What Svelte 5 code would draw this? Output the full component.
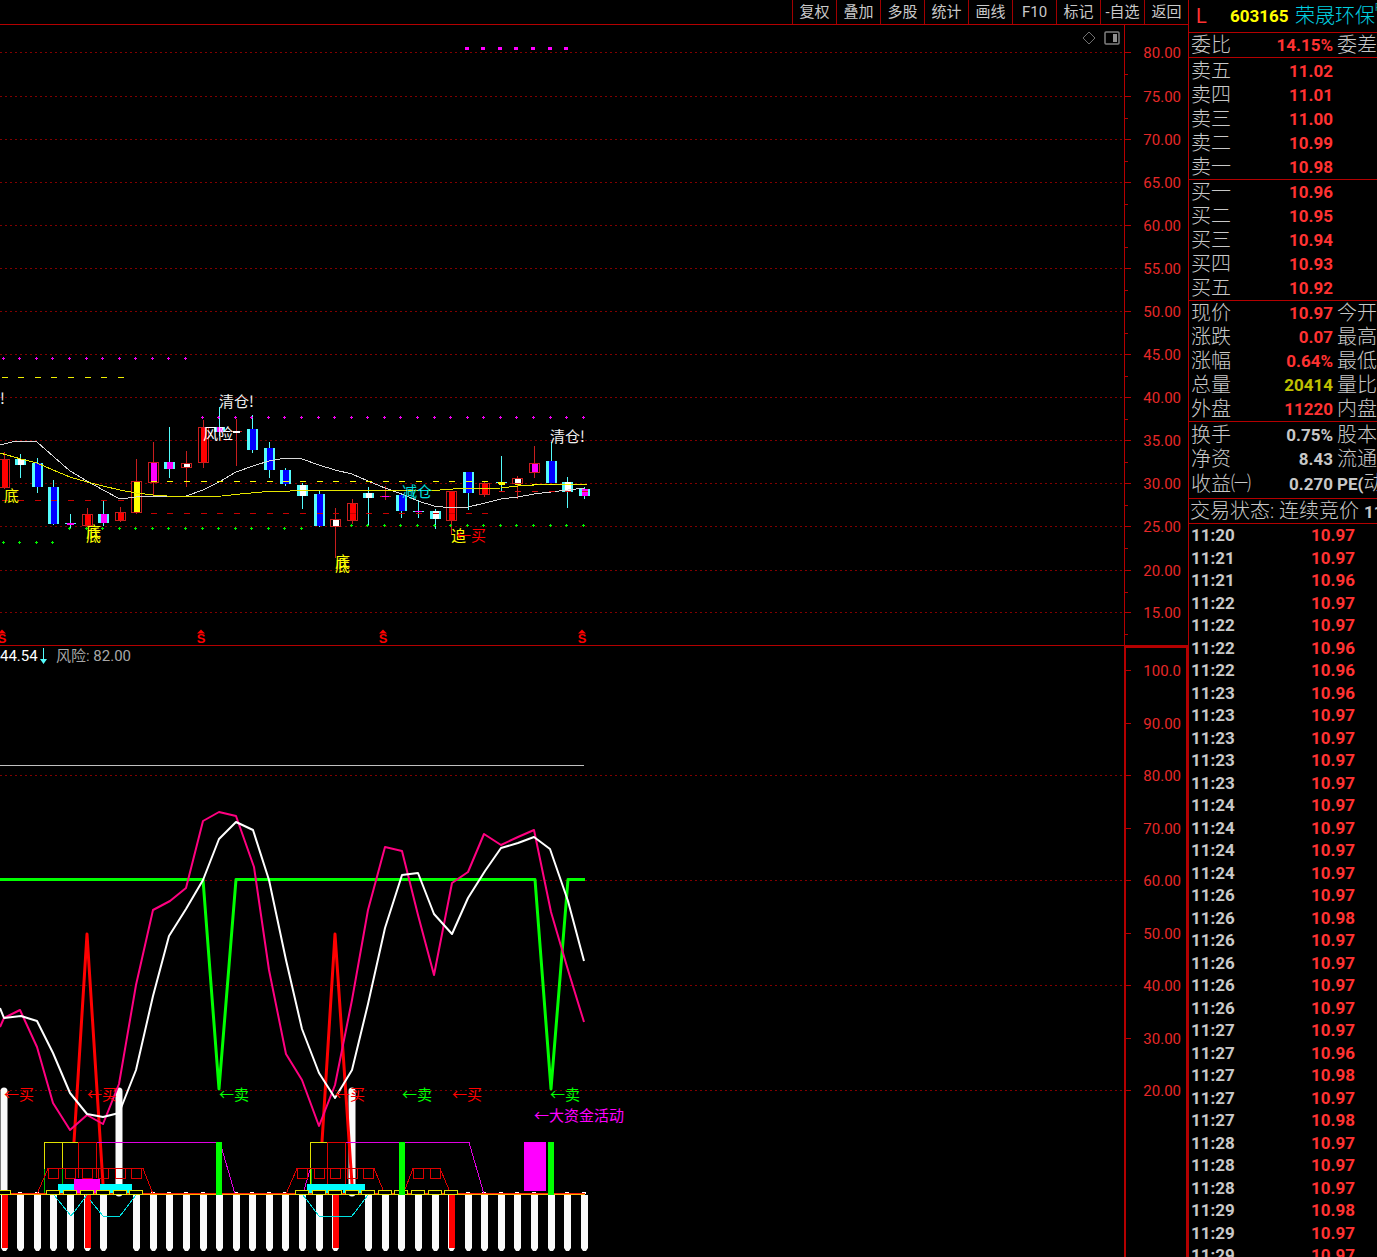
<script>
  const tools = ['复权', '叠加', '多股', '统计', '画线', 'F10', '标记', '-自选', '返回'];

  // One trading day per column
  const colX = (i) => Math.floor(4.2 + i * 16.57);
  const range = (a, b) => Array.from({ length: b - a + 1 }, (_, k) => a + k);
  const columns = range(0, 35);

  const priceScale = [52, 96, 139, 182, 225, 268, 311, 354, 397, 440, 483, 526, 570, 612]
    .map((y, k) => ({ y, label: (80 - k * 5).toFixed(2) }));
  const indicatorScale = [
    { y: 670, label: '100.0' }, { y: 723, label: '90.00' },
    { y: 775, label: '80.00', grid: true }, { y: 828, label: '70.00' },
    { y: 880, label: '60.00', grid: true }, { y: 933, label: '50.00' },
    { y: 985, label: '40.00', grid: true }, { y: 1038, label: '30.00' },
    { y: 1090, label: '20.00', grid: true }
  ];

  const R = '#ff0000', W = '#ffffff', B = '#0000ff', M = '#ff00ff', Y = '#ffff00';
  // high, low, body top, body bottom, rising, core colour
  const candles = [
    [452, 489, 459, 488, 1, R], [454, 478, 459, 465, 0, W], [458, 493, 463, 487, 0, B],
    [480, 525, 487, 524, 0, B], [514, 528, 523, 525, 0, M], [508, 527, 514, 526, 1, R],
    [500, 526, 514, 523, 0, M], [507, 522, 512, 521, 1, R], [459, 514, 481, 513, 1, Y],
    [442, 497, 462, 483, 1, M], [427, 478, 462, 469, 0, M], [451, 487, 463, 468, 1, W],
    [420, 468, 427, 463, 1, R], [407, 436, 427, 432, 0, M], [419, 466, 431, 433, 1, W],
    [415, 453, 429, 450, 0, B], [442, 478, 448, 470, 0, B], [468, 486, 470, 484, 0, B],
    [483, 509, 485, 496, 0, W], [490, 527, 494, 526, 0, B], [508, 558, 519, 527, 1, W],
    [499, 524, 503, 521, 1, R], [487, 525, 493, 498, 0, W], [486, 500, 496, 497, 1, M],
    [493, 518, 495, 511, 0, B], [500, 518, 511, 512, 0, M], [509, 529, 511, 519, 0, W],
    [491, 535, 491, 521, 1, R], [472, 510, 472, 493, 0, B], [481, 497, 483, 495, 1, R],
    [456, 491, 482, 484, 0, Y], [476, 499, 478, 484, 1, W], [446, 478, 463, 473, 1, M],
    [442, 483, 461, 483, 0, B], [477, 508, 482, 492, 0, W], [487, 499, 489, 496, 0, M]
  ].map(([high, low, top, bottom, up, core], i) => ({
    x: colX(i), high, low, top, h: bottom - top, edge: up ? '#c81e1e' : '#54fcfc', up, core
  }));

  const dots = [
    { y: 358, from: 0, to: 11, c: '#f000f0' }, { y: 417, from: 12, to: 35, c: '#f000f0' },
    { y: 542, from: 0, to: 3, c: '#00f000' }, { y: 528, from: 4, to: 18, c: '#00f000' },
    { y: 525, from: 21, to: 35, c: '#00f000' }
  ];
  const dashes = [
    { y: 377, from: 0, to: 7, c: '#f0f000' }, { y: 481, from: 9, to: 29, c: '#ffff00' },
    { y: 484, from: 30, to: 34, c: '#ffff00' }, { y: 500, from: 0, to: 7, c: '#c80000' },
    { y: 513, from: 9, to: 29, c: '#c80000' }, { y: 491, from: 30, to: 35, c: '#dc1414' }
  ];

  const whiteAvg = '0,445 12,442 21,441 37,442 54,457 70,471 87,481 103,490 120,499 136,497 153,496 186,496 203,490 219,482 236,472 253,466 269,461 286,458 302,459 319,465 335,470 352,474 368,481 385,488 402,494 418,501 434,506 452,508 468,507 485,503 501,499 518,497 534,494 568,490 584,488';
  const yellowAvg = '0,453 21,459 37,463 53,470 70,477 87,482 103,486 120,490 136,493 153,495 180,497 222,496 240,494 262,492 290,491 302,490 440,490 453,489 501,488 518,486 534,485 568,484 587,484';
  const pinkLine = '0,1027 4,1018 20,1010 37,1047 53,1103 70,1130 87,1115 103,1124 119,1084 136,985 153,910 170,901 186,888 203,821 219,812 236,816 254,867 269,970 286,1054 302,1080 319,1126 335,1085 352,1000 368,910 385,847 402,851 418,915 434,975 452,883 468,872 484,834 501,845 518,837 534,830 551,912 568,970 584,1022';
  const whiteLine = '0,1008 4,1018 21,1016 37,1021 53,1053 70,1093 87,1114 103,1117 119,1113 136,1070 153,996 169,936 186,909 203,880 219,839 236,822 253,830 269,880 286,960 302,1029 319,1073 335,1098 352,1070 368,1004 385,928 402,875 418,873 434,914 452,934 468,898 485,871 501,848 518,843 534,837 550,849 568,901 584,961';

  const splitMarks = [2, 201, 383, 582];
  const stems = columns.filter((i) => i !== 7 && i !== 21);
  const redStems = [0, 5, 20, 27];
  const knobs = [1, 2, ...range(9, 17), ...range(28, 32), 34, 35];
  const yellowBoxes = [0, ...range(3, 8), ...range(18, 27)];
  const redBoxes = [...range(3, 8), ...range(18, 22), 25, 26];

  const signals = [
    { x: 4, y: 1100, t: '←买', c: '#ff0000' }, { x: 87, y: 1100, t: '←买', c: '#ff0000' },
    { x: 335, y: 1100, t: '←买', c: '#ff0000' }, { x: 452, y: 1100, t: '←买', c: '#ff0000' },
    { x: 219, y: 1100, t: '←卖', c: '#00ff00' }, { x: 402, y: 1100, t: '←卖', c: '#00ff00' },
    { x: 550, y: 1100, t: '←卖', c: '#00ff00' }, { x: 534, y: 1121, t: '←大资金活动', c: M }
  ];
  const notes = [
    { x: 219, y: 407, t: '清仓!', c: '#f0f0f0' }, { x: 203, y: 439, t: '风险', c: W },
    { x: 550, y: 442, t: '清仓!', c: '#f0f0f0' }, { x: 0, y: 404, t: '!', c: '#f0f0f0' },
    { x: 402, y: 497, t: '减仓', c: '#00e0e0' }, { x: 4, y: 501, t: '底', c: Y },
    { x: 86, y: 537, t: '底', c: Y }, { x: 86, y: 541, t: '底', c: Y },
    { x: 335, y: 567, t: '底', c: Y }, { x: 335, y: 571, t: '底', c: Y },
    { x: 451, y: 541, t: '追', c: Y }, { x: 456, y: 541, t: '←买', c: '#ff0000' }
  ];

  const quotes = [
    { cls: 'ratio', rows: [['委比', '14.15%', '委差', 'up']] },
    { cls: 'asks', rows: [['卖五', '11.02'], ['卖四', '11.01'], ['卖三', '11.00'], ['卖二', '10.99'], ['卖一', '10.98']] },
    { cls: 'bids', rows: [['买一', '10.96'], ['买二', '10.95'], ['买三', '10.94'], ['买四', '10.93'], ['买五', '10.92']] },
    { cls: 'price', rows: [['现价', '10.97', '今开'], ['涨跌', '0.07', '最高'], ['涨幅', '0.64%', '最低'], ['总量', '20414', '量比', 'volume'], ['外盘', '11220', '内盘']] },
    { cls: 'base', rows: [['换手', '0.75%', '股本', 'plain'], ['净资', '8.43', '流通', 'plain'], ['收益㈠', '0.270', '动)', 'plain', 'PE(']] }
  ];

  const trades = [
    ['11:20', '10.97'], ['11:21', '10.97'], ['11:21', '10.96'], ['11:22', '10.97'], ['11:22', '10.97'],
    ['11:22', '10.96'], ['11:22', '10.96'], ['11:23', '10.96'], ['11:23', '10.97'], ['11:23', '10.97'],
    ['11:23', '10.97'], ['11:23', '10.97'], ['11:24', '10.97'], ['11:24', '10.97'], ['11:24', '10.97'],
    ['11:24', '10.97'], ['11:26', '10.97'], ['11:26', '10.98'], ['11:26', '10.97'], ['11:26', '10.97'],
    ['11:26', '10.97'], ['11:26', '10.97'], ['11:27', '10.97'], ['11:27', '10.96'], ['11:27', '10.98'],
    ['11:27', '10.97'], ['11:27', '10.98'], ['11:28', '10.97'], ['11:28', '10.97'], ['11:28', '10.97'],
    ['11:29', '10.98'], ['11:29', '10.97'], ['11:29', '10.97']
  ];
</script>

<main class="terminal">
  <section class="charts">
    <nav class="toolbar">
      {#each tools as tool}<button type="button">{tool}</button>{/each}
    </nav>

    <div class="pane upper">
      <div class="plot">
        <svg class="canvas" aria-label="K线图">
          <g transform="translate(0 -25)">
            {#each priceScale as s}
              <line class="grid" x1="0" x2="100%" y1={s.y + 0.5} y2={s.y + 0.5} />
            {/each}
            {#each candles as c}
              <rect x={c.x} y={c.high} width="1" height={c.low - c.high} fill={c.edge} />
              {#if c.h < 3}
                <rect x={c.x - 5} y={c.top} width="11" height="1" fill={c.edge} />
                <rect x={c.x - 3} y={c.top} width="7" height={c.h} fill={c.core} />
              {:else if c.up}
                <rect x={c.x - 4.5} y={c.top + 0.5} width="10" height={c.h - 1} fill="#000" stroke={c.edge} />
                <rect x={c.x - 2} y={c.top + 1} width="6" height={c.h - 2} fill={c.core} />
              {:else}
                <rect x={c.x - 5} y={c.top} width="11" height={c.h} fill={c.edge} />
                <rect x={c.x - 2} y={c.top} width="6" height={c.h} fill={c.core} />
              {/if}
            {/each}
            <polyline points={whiteAvg} class="thin" stroke="#d8d8d8" />
            <polyline points={yellowAvg} class="thin" stroke="#e6e600" />
            {#each dashes as d}
              {#each range(d.from, d.to) as i}
                <rect x={colX(i) - 2} y={d.y} width="6" height="1" fill={d.c} />
              {/each}
            {/each}
            {#each dots as d}
              {#each range(d.from, d.to) as i}
                <rect x={colX(i) - 2} y={d.y} width="3" height="1" fill={d.c} />
                <rect x={colX(i) - 1} y={d.y - 1} width="1" height="3" fill={d.c} />
              {/each}
            {/each}
            {#each range(28, 34) as i}
              <rect x={colX(i) - 3} y="47" width="4" height="3" fill={M} />
            {/each}
            {#each notes as n}<text x={n.x} y={n.y} fill={n.c}>{n.t}</text>{/each}
            {#each splitMarks as x}
              <path d="M{x - 4} 633.5l4-4l4 4z" fill="#ff0000" />
              <text class="split" {x} y="643">S</text>
            {/each}
          </g>
        </svg>
        <div class="corner">
          <button type="button" aria-label="标记点">
            <svg width="14" height="14" viewBox="0 0 14 14"><path d="M7 1l6 6l-6 6l-6-6z" fill="none" stroke="#707070" /></svg>
          </button>
          <button type="button" aria-label="侧栏">
            <svg width="16" height="14" viewBox="0 0 16 14"><rect x="1" y="1" width="14" height="12" rx="1" fill="none" stroke="#808080" stroke-width="1.5" /><rect x="9" y="3" width="4" height="8" fill="#909090" /></svg>
          </button>
        </div>
      </div>
      <svg class="axis">
        <g transform="translate(0 -25)">
          {#each priceScale as s}
            <path d="M0 {s.y + 0.5}h6M0 {s.y + 22.5}h3" stroke="#b40000" />
            <text x="56" y={s.y + 6}>{s.label}</text>
          {/each}
        </g>
      </svg>
    </div>

    <div class="pane lower">
      <div class="plot">
        <svg class="canvas" aria-label="指标图">
          <g transform="translate(0 -646)">
            {#each indicatorScale.filter((s) => s.grid) as s}
              <line class="grid" x1="0" x2="100%" y1={s.y + 0.5} y2={s.y + 0.5} />
            {/each}
            <path d="M0 765.5H584" stroke="#c0c0c0" />

            <path class="stem" d="M4 1091V1190M119 1091V1193M352 1091V1193" />
            {#each stems as i}
              <path fill="#fafafa" d="M{colX(i) - 3} 1195h7v53l-2 3h-3l-2 -3z" />
            {/each}
            {#each knobs as i}<rect x={colX(i) - 2} y="1192" width="4" height="2" fill="#fff" />{/each}
            {#each redStems as i}<rect x={colX(i) - 2} y="1195" width="6" height="53" fill="#ff0000" />{/each}

            <path class="line bold" stroke="#00ff00" d="M0 879.5H203L219 1089L236 879.5H535L551 1089L568 879.5H585" />
            <path class="line bold" stroke="#ff0000" d="M74 1142L87 934L103 1184M322 1142L335 934L352 1184" />
            <polyline class="line" stroke="#ff0080" points={pinkLine} />
            <polyline class="line" stroke="#ffffff" points={whiteLine} />

            <path class="thin" stroke="#00c000" d="M44.5 1169V1194M62.5 1169V1184M311.5 1169V1184" />
            <path class="thin" stroke="#e0e000" d="M44.5 1169V1142.5H78M62.5 1142.5V1169M310.5 1184V1142.5H327" />
            <path class="thin" stroke="#dc0000" d="M78 1142.5H97M78.5 1142.5V1178M96.5 1142.5V1178M327 1142.5H346M327.5 1142.5V1184M345.5 1142.5V1184" />
            <path class="thin" stroke="#e000e0" d="M97 1142.5H220L235 1194M346 1142.5H469L484 1194M304 1190L310 1170" />
            <path class="thin" stroke="#dc0000" d="M37 1194L48 1168.5H143L153 1194M286 1194L297 1168.5H374L384 1192M404 1192L413 1168.5H440L450 1192" />
            {#each redBoxes as i}
              <rect x={colX(i) - 4.5} y="1168.5" width="10" height="10" class="thin" stroke="#dc0000" />
            {/each}
            <path class="thin" stroke="#00e0e0" d="M54 1195L71 1216L87 1195M90 1200L103 1216H120L136 1195M303 1195L319 1216H352L368 1195" />
            <path fill="#00ffff" d="M58 1184H132V1190H58zM60 1190h4v4h-4zM77 1190h4v4h-4zM110 1190h4v4h-4zM127 1190h4v4h-4zM307 1184H365V1190H307zM309 1190h4v4h-4zM326 1190h4v4h-4zM343 1190h4v4h-4zM359 1190h4v4h-4z" />
            <path fill={M} d="M74 1179H100V1190H98V1194H94V1190H81V1194H77V1190H74zM524 1142H546V1191H524z" />
            <path d="M0 1193.5H585" stroke="#ff2000" />
            <path d="M0 1194.5H585" stroke="#ffb000" />
            {#each yellowBoxes as i}
              <rect x={colX(i) - 6.5} y="1190.5" width="13" height="4" fill="#000" stroke="#e0e000" />
            {/each}
            <path fill="#00ff00" d="M216 1142h6v53h-6zM399 1142h6v53h-6zM548 1142h6v53h-6z" />
            {#each signals as s}<text x={s.x} y={s.y} fill={s.c}>{s.t}</text>{/each}
          </g>
        </svg>
        <p class="legend">
          <b>44.54</b>
          <svg width="7" height="16" viewBox="0 0 7 16" aria-label="下降"><path d="M3 0h1v11h3l-3.500 5l-3.500-5h3z" fill="#54fcfc" /></svg>
          <span>风险: 82.00</span>
        </p>
      </div>
      <svg class="axis">
        <g transform="translate(-1 -648)">
          {#each indicatorScale as s}
            <path d="M0 {s.y + 0.5}h6" stroke="#b40000" />
            <text x="56" y={s.y + 6}>{s.label}</text>
          {/each}
        </g>
      </svg>
    </div>
  </section>

  <aside class="quote">
    <h1><span class="flag">L</span><b>603165</b><span class="name">荣晟环保</span><sup>R</sup></h1>
    {#each quotes as block}
      <table class={block.cls}>
        <colgroup><col class="c1" /><col class="c2" /><col /></colgroup>
        <tbody>
          {#each block.rows as [label, value, next, tone, latin]}
            <tr>
              <th scope="row">{label}</th>
              <td class={tone ?? 'up'}>{value}</td>
              <td class="next">{#if latin}<b>{latin}</b>{/if}{next ?? ''}</td>
            </tr>
          {/each}
        </tbody>
      </table>
    {/each}
    <p class="status">交易状态: 连续竞价 <b>11:30</b></p>
    <table class="trades">
      <colgroup><col class="t1" /><col class="t2" /><col /></colgroup>
      <tbody>
        {#each trades as [time, price]}
          <tr><th scope="row">{time}</th><td class="up">{price}</td><td></td></tr>
        {/each}
      </tbody>
    </table>
  </aside>
</main>

<style>
  :global(body) {
    margin: 0;
    background: #000;
  }
  .terminal {
    display: flex;
    height: 100vh;
    overflow: hidden;
    background: #000;
    color: #c8c8c8;
    font-family: Roboto, 'Noto Sans CJK SC', sans-serif;
    font-size: 15px;
  }
  .charts {
    flex: 1;
    min-width: 0;
    display: flex;
    flex-direction: column;
  }
  button {
    margin: 0;
    padding: 0;
    border: 0;
    background: none;
    color: inherit;
    font: inherit;
  }
  .toolbar {
    display: flex;
    justify-content: flex-end;
    height: 24px;
    border-bottom: 1px solid #b40000;
    line-height: 22px;
  }
  .toolbar button {
    width: 44px;
    border-left: 1px solid #a00000;
    white-space: nowrap;
  }
  .pane {
    display: flex;
  }
  .upper {
    height: 620px;
    border-bottom: 1px solid #b40000;
  }
  .lower {
    flex: 1;
    min-height: 0;
  }
  .plot {
    position: relative;
    flex: 1;
    min-width: 0;
    overflow: hidden;
  }
  .canvas {
    display: block;
    width: 100%;
    height: 100%;
    font-family: 'Noto Sans CJK SC', sans-serif;
  }
  .grid {
    stroke: #820000;
    stroke-dasharray: 2 3;
    shape-rendering: crispEdges;
  }
  .thin {
    fill: none;
    stroke-width: 1;
    shape-rendering: crispEdges;
  }
  .line {
    fill: none;
    stroke-width: 2;
    stroke-linejoin: round;
  }
  .bold {
    stroke-width: 3;
  }
  .stem {
    stroke: #fafafa;
    stroke-width: 7;
    stroke-linecap: round;
  }
  .split {
    fill: #ff0000;
    font: bold 13px 'Liberation Sans', sans-serif;
    text-anchor: middle;
  }
  .axis {
    box-sizing: border-box;
    flex: none;
    width: 64px;
    height: 100%;
    border-left: 1px solid #b40000;
  }
  .axis text {
    fill: #e62828;
    text-anchor: end;
  }
  .lower .axis {
    border: 2px solid #b40000;
    border-bottom: 0;
  }
  .corner {
    position: absolute;
    top: 6px;
    right: 4px;
    display: flex;
    gap: 8px;
  }
  .corner svg {
    display: block;
  }
  .legend {
    position: absolute;
    top: 0;
    left: 0;
    display: flex;
    align-items: center;
    margin: 0;
    line-height: 20px;
  }
  .legend b {
    width: 40px;
    color: #fff;
    font-weight: 400;
  }
  .legend span {
    padding-left: 9px;
    color: #a8a8a8;
  }
  .quote {
    flex: none;
    box-sizing: border-box;
    width: 189px;
    overflow: hidden;
    border-left: 1px solid #b40000;
    font-size: 20px;
    white-space: nowrap;
  }
  h1 {
    display: flex;
    margin: 0;
    padding-left: 7px;
    border-bottom: 1px solid #b40000;
    font-size: 20px;
    font-weight: 400;
    line-height: 32px;
  }
  b {
    font-size: 17px;
    font-weight: 700;
  }
  .legend b {
    font-size: 15px;
  }
  h1 b {
    flex: none;
    width: 65px;
    color: #ffff00;
  }
  .flag {
    flex: none;
    width: 34px;
    color: #ff3232;
  }
  .name,
  sup {
    color: #00d0e0;
    font-weight: 300;
  }
  sup {
    font-size: 10px;
    line-height: 16px;
  }
  table {
    width: 100%;
    border-collapse: separate;
    border-spacing: 0;
    table-layout: fixed;
    border-bottom: 1px solid #b40000;
  }
  .c1 {
    width: 62px;
  }
  .c2 {
    width: 82px;
  }
  th,
  td {
    height: 24px;
    padding: 0;
    font-weight: 300;
    line-height: 24px;
  }
  th {
    padding-left: 2px;
    text-align: left;
  }
  td {
    font-size: 17px;
    font-weight: 700;
    text-align: right;
  }
  .next {
    padding-left: 4px;
    font-size: 20px;
    font-weight: 300;
    text-align: left;
  }
  .up {
    color: #ff3232;
  }
  .volume {
    color: #c0c000;
  }
  .asks {
    padding-top: 1px;
  }
  .base {
    padding: 1px 0 2px;
  }
  .status {
    height: 24px;
    margin: 0;
    padding-left: 1px;
    border-bottom: 1px solid #b40000;
    font-weight: 300;
    line-height: 24px;
  }
  .trades {
    border: 0;
  }
  .t1 {
    width: 66px;
  }
  .t2 {
    width: 100px;
  }
  .trades th {
    font-size: 17px;
    font-weight: 700;
  }
  .trades th,
  .trades td {
    height: 22px;
    line-height: 22px;
  }
  .trades tr:nth-child(even) th,
  .trades tr:nth-child(even) td {
    height: 23px;
  }
</style>
